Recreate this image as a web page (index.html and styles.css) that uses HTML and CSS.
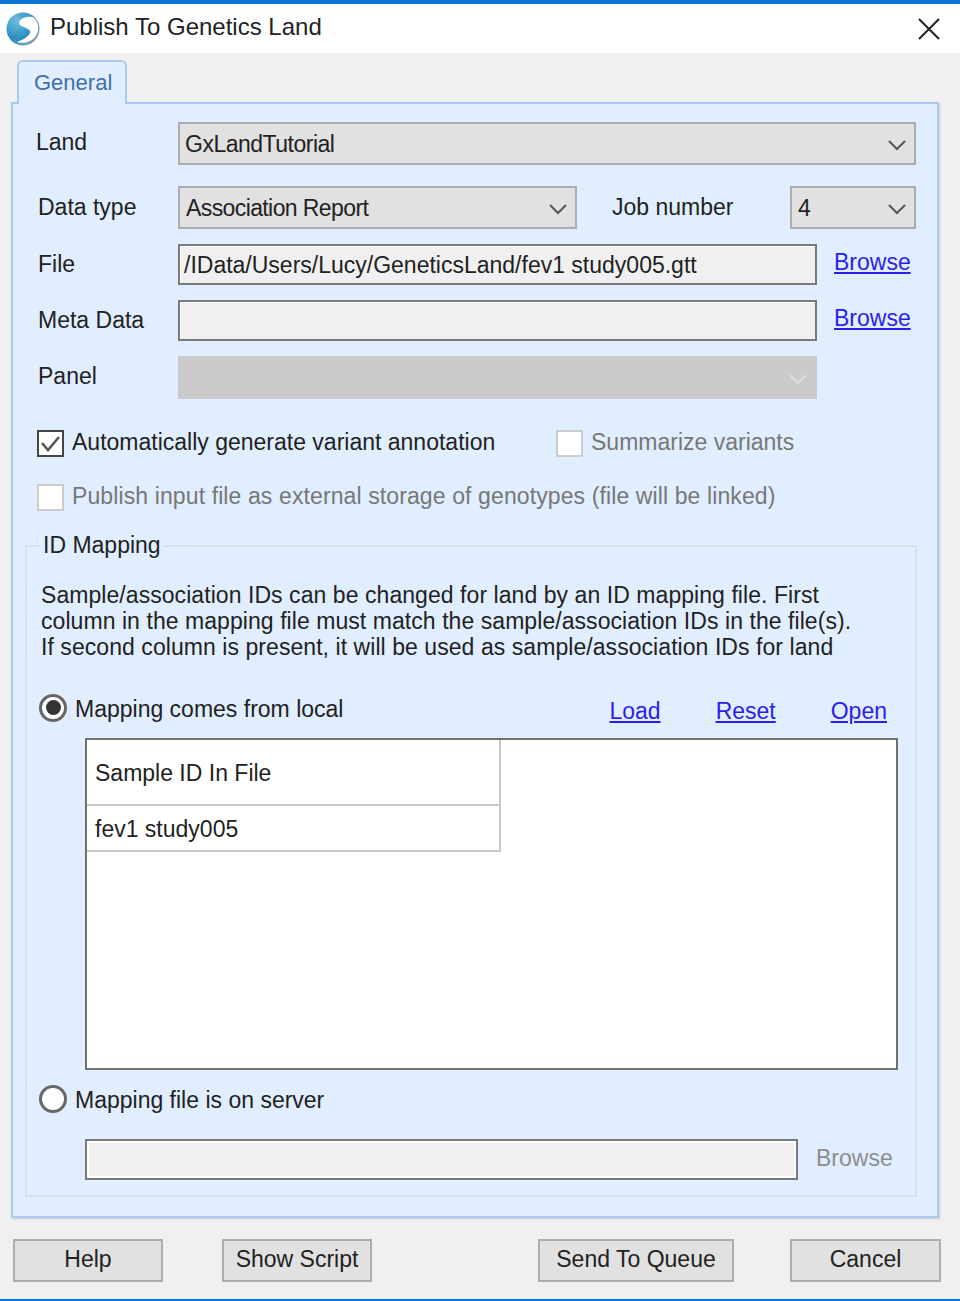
FILE: index.html
```html
<!DOCTYPE html>
<html lang="en">
<head>
    <meta charset="UTF-8">
    <meta name="viewport" content="width=device-width, initial-scale=1.0">
    <title>Publish To Genetics Land</title>
    <link rel="stylesheet" href="styles.css">
</head>
<body>
    <header class="titlebar">
        <svg class="logo" width="34" height="34" viewBox="0 0 34 34">
            <defs>
                <radialGradient id="ball" cx="0.3" cy="0.25" r="0.85">
                    <stop offset="0" stop-color="#6fbde0"/>
                    <stop offset="0.65" stop-color="#2a8cc0"/>
                    <stop offset="1" stop-color="#8ea2ae"/>
                </radialGradient>
            </defs>
            <circle cx="17" cy="17" r="16.5" fill="url(#ball)"/>
            <path d="M27 5 C20 4 13 7 13 11 C13 15 22 15 24 19 C25 22 20 27 11 30 C20 33 30 28 32 19 C33 13 31 8 27 5 Z" fill="#fff"/>
        </svg>
        <span class="title">Publish To Genetics Land</span>
        <svg class="close" width="24" height="24" viewBox="0 0 24 24">
            <path d="M2 2 L22 22 M22 2 L2 22" stroke="#222" stroke-width="2" fill="none"/>
        </svg>
    </header>

    <div class="tabs">
        <div class="tab">General</div>
    </div>

    <main class="panel">
        <div class="row row-land">
            <label class="label label-land">Land</label>
            <div class="select select-full">
                <span>GxLandTutorial</span>
                <svg class="chev" width="20" height="12" viewBox="0 0 20 12"><path d="M2 2 L10 10 L18 2" fill="none" stroke="#555" stroke-width="2"/></svg>
            </div>
        </div>

        <div class="row row-type">
            <label class="label">Data type</label>
            <div class="select select-type">
                <span>Association Report</span>
                <svg class="chev" width="20" height="12" viewBox="0 0 20 12"><path d="M2 2 L10 10 L18 2" fill="none" stroke="#555" stroke-width="2"/></svg>
            </div>
            <label class="label-job">Job number</label>
            <div class="select select-job">
                <span>4</span>
                <svg class="chev" width="20" height="12" viewBox="0 0 20 12"><path d="M2 2 L10 10 L18 2" fill="none" stroke="#555" stroke-width="2"/></svg>
            </div>
        </div>

        <div class="row row-input">
            <label class="label">File</label>
            <div class="input">/IData/Users/Lucy/GeneticsLand/fev1 study005.gtt</div>
            <a class="link browse" href="#">Browse</a>
        </div>

        <div class="row row-input">
            <label class="label">Meta Data</label>
            <div class="input"></div>
            <a class="link browse" href="#">Browse</a>
        </div>

        <div class="row row-input row-panel">
            <label class="label label-panel">Panel</label>
            <div class="select select-off">
                <svg class="chev" width="20" height="12" viewBox="0 0 20 12"><path d="M2 2 L10 10 L18 2" fill="none" stroke="#ddd" stroke-width="2"/></svg>
            </div>
        </div>

        <div class="row check-row first-check">
            <span class="check">
                <svg width="23" height="23" viewBox="0 0 23 23"><path d="M3 11 L9 18 L20 5" fill="none" stroke="#555" stroke-width="2.5"/></svg>
            </span>
            <span class="check-text check-wide">Automatically generate variant annotation</span>
            <span class="check check-off"></span>
            <span class="check-text muted">Summarize variants</span>
        </div>

        <div class="row check-row second-check">
            <span class="check check-off"></span>
            <span class="check-text muted publish-text">Publish input file as external storage of genotypes (file will be linked)</span>
        </div>

        <fieldset class="group">
            <legend>ID Mapping</legend>
            <p class="desc">Sample/association IDs can be changed for land by an ID mapping file. First<br>column in the mapping file must match the sample/association IDs in the file(s).<br>If second column is present, it will be used as sample/association IDs for land</p>

            <div class="radio-row">
                <span class="radio radio-on"></span>
                <span class="radio-text">Mapping comes from local</span>
                <div class="links">
                    <a class="link" href="#">Load</a>
                    <a class="link" href="#">Reset</a>
                    <a class="link" href="#">Open</a>
                </div>
            </div>

            <div class="grid-box">
                <table class="ids">
                    <tr><th>Sample ID In File</th></tr>
                    <tr><td>fev1 study005</td></tr>
                </table>
            </div>

            <div class="radio-row radio-row-server">
                <span class="radio"></span>
                <span class="radio-text">Mapping file is on server</span>
            </div>

            <div class="server-row">
                <div class="input input-server"></div>
                <span class="browse-off">Browse</span>
            </div>
        </fieldset>
    </main>

    <footer class="buttons">
        <button class="btn btn-help">Help</button>
        <button class="btn btn-script">Show Script</button>
        <button class="btn btn-send">Send To Queue</button>
        <button class="btn btn-cancel">Cancel</button>
    </footer>
</body>
</html>
```
FILE: styles.css
```css
* {
    box-sizing: border-box;
    margin: 0;
    padding: 0;
}

html {
    background-color: #f0f0f0;
}

body {
    width: 960px;
    height: 1301px;
    overflow: hidden;
    border-top: 4px solid #0a78d2;
    border-bottom: 2px solid #0a78d2;
    font-family: "Liberation Sans", Arial, sans-serif;
    font-size: 23px;
    color: #222;
}

.titlebar {
    display: flex;
    align-items: center;
    height: 49px;
    padding: 0 19px 0 6px;
    background-color: #fff;
}

.title {
    margin: -4px 0 0 10px;
    font-size: 24px;
}

.close {
    margin-left: auto;
}

.tabs {
    display: flex;
    padding: 7px 0 0 17px;
}

.tab {
    position: relative;
    z-index: 1;
    width: 110px;
    height: 44px;
    margin-bottom: -2px;
    padding: 8px 0 0 15px;
    background-color: #e1eeff;
    border: 2px solid #a9c9ee;
    border-bottom: none;
    border-radius: 6px 6px 0 0;
    font-size: 22px;
    color: #3d6fa8;
}

.panel {
    width: 928px;
    height: 1116px;
    margin-left: 11px;
    padding: 18px 21px 0 25px;
    background-color: #e1eeff;
    border: 2px solid #a9c9ee;
    box-shadow: 1px 1px 2px #ccc;
}

.row {
    display: flex;
    align-items: center;
}

.row-land {
    height: 43px;
}

.row-type {
    height: 43px;
    margin-top: 21px;
}

.row-input {
    height: 41px;
    margin-top: 15px;
}

.row-panel {
    height: 43px;
}

.label {
    width: 140px;
    flex-shrink: 0;
}

.label-panel {
    margin-top: -2px;
}

.label-land {
    margin: -2px 0 0 -2px;
    width: 142px;
}

.label-job {
    width: 213px;
    padding-left: 35px;
}

.select {
    display: flex;
    align-items: center;
    justify-content: space-between;
    height: 43px;
    padding: 2px 7px 0 6px;
    background-color: #e1e1e1;
    border: 2px solid #adadad;
}

.select-full {
    width: 738px;
    padding-left: 5px;
    letter-spacing: -0.5px;
}

.select-type {
    width: 399px;
    letter-spacing: -0.6px;
}

.select-job {
    width: 126px;
}

.select-off {
    width: 639px;
    justify-content: flex-end;
    background-color: #cbcbcb;
    border-color: #cbcbcb;
}

.input {
    width: 639px;
    height: 41px;
    padding: 6px 4px 4px;
    background-color: #f0f0f0;
    border: 2px solid #7a7a7a;
    box-shadow: inset 1px 1px 0 #fff;
    white-space: nowrap;
}

.link {
    color: #2a1fee;
}

.browse {
    margin: -4px 0 0 17px;
}

.check-row {
    height: 27px;
}

.first-check {
    margin-top: 31px;
}

.second-check {
    margin-top: 27px;
}

.check {
    display: flex;
    flex-shrink: 0;
    width: 27px;
    height: 27px;
    margin-left: -1px;
    background-color: #fff;
    border: 2px solid #444;
}

.check-off {
    border-color: #ccc;
}

.check-text {
    margin: -3px 0 0 8px;
}

.check-wide {
    width: 485px;
}

.publish-text {
    letter-spacing: 0.11px;
}

.muted {
    color: #777;
}

.group {
    width: 892px;
    min-width: 0;
    height: 665px;
    margin: 21px 0 0 -13px;
    padding: 0 18px 0 14px;
    border: 2px solid #d9dfe6;
}

.group legend {
    margin-left: 0;
    padding: 0 2px;
}

.desc {
    margin-top: 23px;
    line-height: 26px;
    letter-spacing: 0.06px;
    white-space: nowrap;
}

.radio-row {
    display: flex;
    align-items: center;
    height: 27px;
    margin-top: 34px;
}

.radio {
    flex-shrink: 0;
    display: flex;
    align-items: center;
    justify-content: center;
    width: 28px;
    height: 28px;
    margin-left: -2px;
    background-color: #fff;
    border: 3px solid #666;
    border-radius: 50%;
}

.radio-on::before {
    content: '';
    width: 15px;
    height: 15px;
    background-color: #333;
    border-radius: 50%;
}

.radio-text {
    margin-left: 8px;
    padding-top: 3px;
}

.links {
    display: flex;
    gap: 55px;
    margin-left: auto;
    padding: 8px 10px 0 0;
}

.grid-box {
    width: 813px;
    height: 332px;
    margin: 17px 0 0 44px;
    background-color: #fff;
    border: 2px solid #707070;
}

.ids {
    width: 414px;
    border-collapse: collapse;
}

.ids th,
.ids td {
    padding: 2px 0 0 8px;
    border: 2px solid #c8c8c8;
    border-left: none;
    font-weight: normal;
    text-align: left;
}

.ids th {
    height: 65px;
    border-top: none;
}

.ids td {
    height: 46px;
}

.radio-row-server {
    margin-top: 15px;
}

.server-row {
    display: flex;
    align-items: center;
    margin: 27px 0 0 44px;
}

.input-server {
    width: 713px;
    box-shadow: inset 0 0 0 2px #fff;
}

.browse-off {
    margin: -2px 0 0 18px;
    color: #8e8e8e;
}

.buttons {
    display: flex;
    padding: 21px 0 0 13px;
}

.btn {
    height: 43px;
    padding-bottom: 2px;
    background-color: #e1e1e1;
    border: 2px solid #adadad;
    font: inherit;
    color: inherit;
}

.btn-help {
    width: 150px;
}

.btn-script {
    width: 150px;
    margin-left: 59px;
}

.btn-send {
    width: 196px;
    margin-left: 166px;
}

.btn-cancel {
    width: 151px;
    margin-left: 56px;
}
```
